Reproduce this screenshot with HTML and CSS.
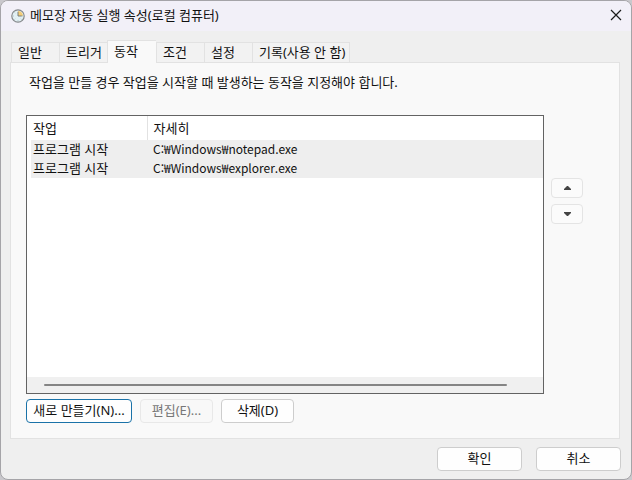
FILE: index.html
```html
<!DOCTYPE html>
<html lang="ko">
<head>
  <meta charset="UTF-8" />
  <meta name="viewport" content="width=device-width, initial-scale=1.0" />
  <title>메모장 자동 실행 속성(로컬 컴퓨터)</title>
  <link rel="stylesheet" href="styles.css">
</head>
<body>
  <div class="dialog">
    <header class="title-bar">
      <svg class="clock" viewBox="0 0 14 14" aria-hidden="true">
        <circle cx="7" cy="7" r="6.2" fill="#e3f0f3" stroke="#85888b" stroke-width="1.2" />
        <path d="M7 7V2A5 5 0 0 1 12 7z" fill="#f5cd78" />
        <path d="M2.2 7h.8M7 11v.8M11 7h.8M3.6 3.6l.6.6M3.6 10.4l.6-.6M10.4 10.4l-.6-.6" stroke="#8fa9b5" stroke-width=".7" />
        <path d="M7 2.8V7h3.8" fill="none" stroke="#6b7478" stroke-width=".9" />
      </svg>
      <h1>메모장 자동 실행 속성(로컬 컴퓨터)</h1>
      <button class="close" aria-label="닫기">
        <svg viewBox="0 0 12 12"><path d="M1 1l10 10M11 1L1 11" fill="none" stroke="#1b1b1b" stroke-width="1.2" /></svg>
      </button>
    </header>

    <main class="content">
      <div class="tabs" role="tablist">
        <button class="tab" role="tab">일반</button>
        <button class="tab" role="tab">트리거</button>
        <button class="tab active" role="tab" aria-selected="true">동작</button>
        <button class="tab" role="tab">조건</button>
        <button class="tab" role="tab">설정</button>
        <button class="tab tab-wide" role="tab">기록(사용 안 함)</button>
      </div>

      <section class="panel" role="tabpanel">
        <p>작업을 만들 경우 작업을 시작할 때 발생하는 동작을 지정해야 합니다.</p>

        <div class="list-row">
          <div class="list">
            <table>
              <thead>
                <tr><th class="col-action">작업</th><th>자세히</th></tr>
              </thead>
              <tbody>
                <tr><td>프로그램 시작</td><td class="path">C:₩Windows₩notepad.exe</td></tr>
                <tr><td>프로그램 시작</td><td class="path">C:₩Windows₩explorer.exe</td></tr>
              </tbody>
            </table>
            <div class="scrollbar"><div class="thumb"></div></div>
          </div>
          <div class="order">
            <button class="btn" aria-label="위로">
              <svg viewBox="0 0 7 4"><path d="M0 4V3L3 0h1l3 3v1z" fill="#444" /></svg>
            </button>
            <button class="btn" aria-label="아래로">
              <svg viewBox="0 0 7 4"><path d="M0 0v1l3 3h1l3-3V0z" fill="#444" /></svg>
            </button>
          </div>
        </div>

        <div class="actions">
          <button class="btn btn-new">새로 만들기(N)...</button>
          <button class="btn" disabled>편집(E)...</button>
          <button class="btn">삭제(D)</button>
        </div>
      </section>
    </main>

    <footer class="footer">
      <button class="btn">확인</button>
      <button class="btn">취소</button>
    </footer>
  </div>
</body>
</html>
```
FILE: styles.css
```css
:root {
  --dialog-bg: #efefef;
  --title-bg: #f2f0f8;
  --panel-bg: #f9f9f9;
  --line: #e2e2e2;
  --list-border: #636363;
  --accent: #1a72a8;
}

* {
  box-sizing: border-box;
}

body {
  margin: 0;
  background: #c9c8cc;
  font-family: 'Noto Sans', 'Noto Sans CJK KR', sans-serif;
  font-size: 13px;
  line-height: 18px;
  color: #111;
}

button {
  font: inherit;
  color: inherit;
  padding: 0;
}

.dialog {
  display: flex;
  flex-direction: column;
  min-height: 100vh;
  background: var(--dialog-bg);
  border: 1px solid #a5a4a8;
  border-radius: 8px;
  overflow: hidden;
}

/* Title bar */
.title-bar {
  display: flex;
  align-items: center;
  height: 30px;
  padding: 0 9px 2px 10px;
  background: var(--title-bg);
}
.title-bar h1 {
  flex: 1;
  margin: 0 0 0 5px;
  font-size: 13px;
  font-weight: 400;
}
.clock {
  width: 14px;
  height: 14px;
  margin-top: 2px;
}
.close {
  display: flex;
  border: none;
  background: none;
}
.close svg {
  width: 12px;
  height: 12px;
}

/* Tabs */
.content {
  flex: 1;
  display: flex;
  flex-direction: column;
  padding: 9px 11px 0 9px;
}
.tabs {
  display: flex;
  align-items: flex-end;
  padding-left: 1px;
}
.tab {
  width: 48px;
  height: 20px;
  padding: 0 0 1px 6px;
  text-align: left;
  white-space: nowrap;
  background: #f2f2f2;
  border: 1px solid var(--line);
  border-width: 1px 0 0 1px;
}
.tab.active {
  width: 49px;
  height: 23px;
  margin-bottom: -1px;
  padding-bottom: 3px;
  background: var(--panel-bg);
  z-index: 1;
}
.tab-wide {
  width: 98px;
  border-right-width: 1px;
}

.panel {
  flex: 1;
  padding: 10px 36px 15px 15px;
  background: var(--panel-bg);
  border: 1px solid var(--line);
}
.panel p {
  margin: 0 0 24px 3px;
}

/* Action list */
.list-row {
  display: flex;
  gap: 7px;
}
.list {
  flex: 1;
  display: flex;
  flex-direction: column;
  justify-content: space-between;
  height: 279px;
  padding-left: 4px;
  background: #fff;
  border: 1px solid var(--list-border);
}
table {
  width: 100%;
  border-collapse: collapse;
  table-layout: fixed;
}
th, td {
  height: 19px;
  padding: 0 0 1px 6px;
  line-height: 16px;
  text-align: left;
  font-weight: 400;
}
th {
  height: 24px;
}
th:first-child, td:first-child {
  padding-left: 2px;
}
.col-action {
  width: 116px;
  border-right: 1px solid var(--line);
}
td {
  background: #eee;
}
.path {
  font-family: 'Noto Sans CJK KR', sans-serif;
  font-size: 12px;
}
.scrollbar {
  height: 16px;
  margin-left: -4px;
  padding: 7px 36px 0 17px;
  background: #f0f0f0;
}
.thumb {
  height: 2px;
  border-radius: 1px;
  background: #858585;
}

.order {
  display: flex;
  flex-direction: column;
  gap: 6px;
  width: 32px;
  padding-top: 63px;
}
.order .btn {
  display: flex;
  align-items: center;
  justify-content: center;
  height: 20px;
  padding: 0;
  background: #fbfbfb;
  border-color: #e4e4e4;
}
.order svg {
  width: 7px;
  height: 4px;
}

/* Buttons */
.btn {
  height: 24px;
  padding-bottom: 2px;
  background: #fefefe;
  border: 1px solid #cdcdcd;
  border-radius: 4px;
}
.actions {
  display: flex;
  gap: 8px;
  padding-top: 5px;
}
.actions .btn {
  width: 73px;
}
.actions .btn-new {
  width: 106px;
  border-color: var(--accent);
}
.btn:disabled {
  background: #f8f8f8;
  border-color: #e8e8e8;
  color: #777;
}

.footer {
  display: flex;
  justify-content: flex-end;
  gap: 14px;
  padding: 8px 10px;
}
.footer .btn {
  width: 85px;
}
```
